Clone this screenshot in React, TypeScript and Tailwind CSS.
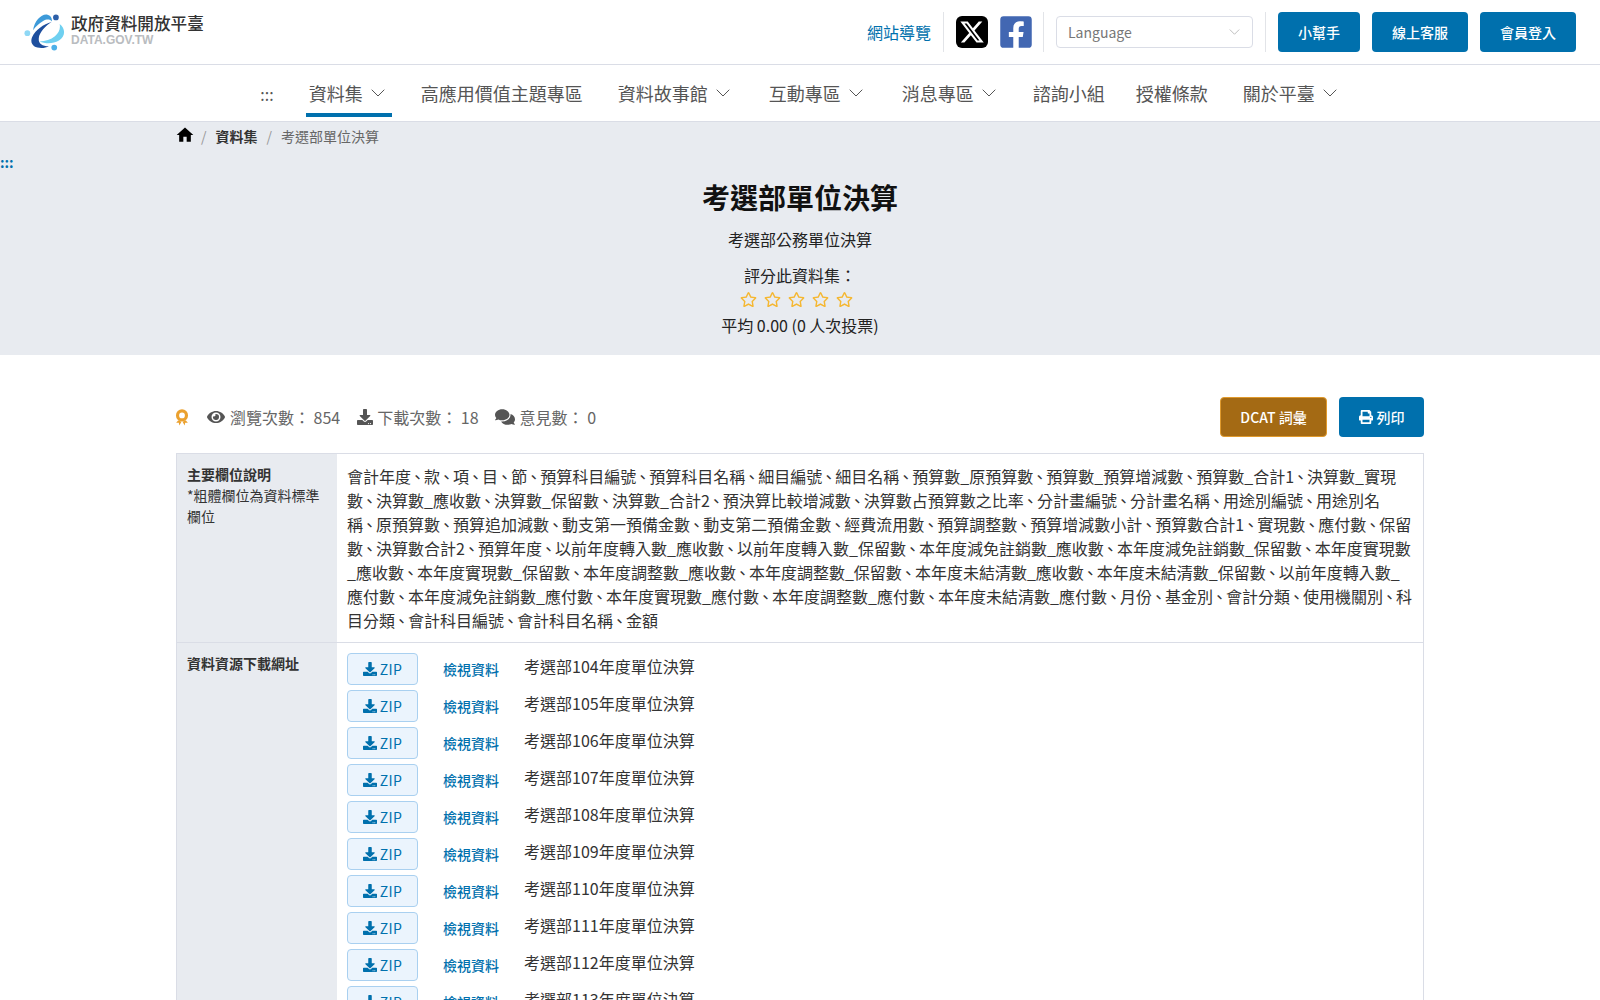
import { Fragment } from "react";
import { FaDownload, FaEye, FaComments, FaPrint, FaRegStar, FaFacebookSquare } from "react-icons/fa";
import { FaXTwitter } from "react-icons/fa6";
import { MdHome } from "react-icons/md";

const font = { fontFamily: '"Noto Sans CJK TC", "Noto Sans", sans-serif' };

function Logo() {
  return (
    <svg width="41" height="37" viewBox="70 40 122 110" className="shrink-0">
      <path d="M176 70C194 84 194 106 174 119C156 130 134 129 116 122C134 120 150 116 162 106C174 95 179 84 176 70Z" fill="#6fd0f0" />
      <path d="M97 88C101 60 123 38 140 42C149 44 154 52 153 62C147 55 137 55 127 61C114 68 105 78 97 88Z" fill="#3d9ad9" />
      <path d="M152 64C128 70 104 88 94 109C88 124 95 136 110 140C122 143 135 141 144 136C125 136 112 128 114 112C116 94 134 76 152 64Z" fill="#1e4f9e" />
      <circle cx="165" cy="50" r="8.5" fill="#2d5fa8" />
      <circle cx="80" cy="97" r="8.5" fill="#8fd8f5" />
      <circle cx="160" cy="140" r="8.5" fill="#4db0e8" />
    </svg>
  );
}

function Medal() {
  return (
    <svg width="14" height="17" viewBox="0 0 13 16" className="shrink-0 mr-[18px] -ml-px">
      <circle cx="6.5" cy="6" r="4.2" fill="none" stroke="#eba12f" strokeWidth="3" />
      <path d="M3 10.5L1 13H3.5L4 15.5L6 12ZM10 10.5L12 13H9.5L9 15.5L7 12Z" fill="#eba12f" />
    </svg>
  );
}

function Chevron({ w, h, color, className }: { w: number; h: number; color: string; className?: string }) {
  return (
    <svg width={w} height={h} viewBox="0 0 14 8" className={className}>
      <polyline points="0.7,0.7 7,7 13.3,0.7" fill="none" stroke={color} strokeWidth="1" />
    </svg>
  );
}

function Sep() {
  return <div className="w-px h-10 bg-[#e2e4e8]" />;
}

function NavItem({ label, chevron, active, className = "" }: { label: string; chevron?: boolean; active?: boolean; className?: string }) {
  return (
    <div className={`h-[52px] flex items-center px-[3px] border-b-4 pt-2 ${active ? "border-[#0070ad]" : "border-transparent"} ${className}`}>
      <span className="text-[18px] text-[#555555] leading-none whitespace-nowrap">{label}</span>
      {chevron && <Chevron w={14} h={8} color="#555555" className="ml-2 mr-1" />}
    </div>
  );
}

const descLines = [
  "會計年度、款、項、目、節、預算科目編號、預算科目名稱、細目編號、細目名稱、預算數_原預算數、預算數_預算增減數、預算數_合計1、決算數_實現",
  "數、決算數_應收數、決算數_保留數、決算數_合計2、預決算比較增減數、決算數占預算數之比率、分計畫編號、分計畫名稱、用途別編號、用途別名",
  "稱、原預算數、預算追加減數、動支第一預備金數、動支第二預備金數、經費流用數、預算調整數、預算增減數小計、預算數合計1、實現數、應付數、保留",
  "數、決算數合計2、預算年度、以前年度轉入數_應收數、以前年度轉入數_保留數、本年度減免註銷數_應收數、本年度減免註銷數_保留數、本年度實現數",
  "_應收數、本年度實現數_保留數、本年度調整數_應收數、本年度調整數_保留數、本年度未結清數_應收數、本年度未結清數_保留數、以前年度轉入數_",
  "應付數、本年度減免註銷數_應付數、本年度實現數_應付數、本年度調整數_應付數、本年度未結清數_應付數、月份、基金別、會計分類、使用機關別、科",
  "目分類、會計科目編號、會計科目名稱、金額",
];

const years = [104, 105, 106, 107, 108, 109, 110, 111, 112, 113, 114];

export default function App() {
  return (
    <div className="h-screen overflow-hidden bg-white text-[#333333]" style={font} lang="zh-Hant">
      <header className="h-[65px] border-b border-[#dadde6] flex items-center justify-between pl-6 pr-6">
        <div className="flex items-center gap-[6px]">
          <Logo />
          <div className="flex flex-col mb-[5px]">
            <span className="text-[16.6px] leading-[20px] text-[#333333] font-medium whitespace-nowrap">政府資料開放平臺</span>
            <span className="text-[12px] leading-[14px] font-bold text-[#b9bcc0]" style={{ fontFamily: '"Liberation Sans", sans-serif' }}>DATA.GOV.TW</span>
          </div>
        </div>
        <div className="flex items-center">
          <a className="text-[16px] text-[#0070ad] mr-3">網站導覽</a>
          <Sep />
          <div className="w-[32px] h-[32px] bg-black rounded-[6px] flex items-center justify-center ml-3">
            <FaXTwitter className="text-white w-[26px] h-[26px]" />
          </div>
          <FaFacebookSquare className="text-[#4267b2] w-[36px] h-[36px] ml-[10px]" />
          <div className="ml-[9px]"><Sep /></div>
          <div className="ml-[12px] w-[197px] h-8 border border-[#dadde6] rounded-[4px] flex items-center justify-between pl-[11px] pr-[12px]">
            <span className="text-[14px] text-[#777777]">Language</span>
            <Chevron w={11} h={6} color="#aaaaaa" />
          </div>
          <div className="ml-[12px]"><Sep /></div>
          <div className="flex gap-3 ml-3">
            <button className="w-[82px] h-10 bg-[#0070ad] rounded-[4px] text-white text-[14px] font-medium">小幫手</button>
            <button className="w-24 h-10 bg-[#0070ad] rounded-[4px] text-white text-[14px] font-medium">線上客服</button>
            <button className="w-24 h-10 bg-[#0070ad] rounded-[4px] text-white text-[14px] font-medium">會員登入</button>
          </div>
        </div>
      </header>

      <nav className="h-14 flex items-start justify-center pl-1">
        <div className="flex items-center gap-[29px]">
          <span className="text-[16px] text-[#555555] leading-none pr-[3px] mt-[6px]">:::</span>
          <NavItem label="資料集" chevron active className="-mr-[3px]" />
          <NavItem label="高應用價值主題專區" />
          <NavItem label="資料故事館" chevron />
          <NavItem label="互動專區" chevron />
          <NavItem label="消息專區" chevron className="-mr-[2px]" />
          <NavItem label="諮詢小組" className="-mr-1" />
          <NavItem label="授權條款" />
          <NavItem label="關於平臺" chevron />
        </div>
      </nav>

      <section className="h-[234px] bg-[#e8ebf0] border-t border-[#dadde6] flex flex-col">
        <div className="mx-auto w-[1248px] h-[28px] flex items-center text-[14px]">
          <MdHome className="w-[20px] h-[20px] text-black -ml-[1px] -mr-[2px] -mt-[2px]" />
          <span className="ml-[8px] mr-[9px] text-[#999999]">/</span>
          <span className="font-bold text-[#333333]">資料集</span>
          <span className="mx-[9px] text-[#999999]">/</span>
          <span className="text-[#666666]">考選部單位決算</span>
        </div>
        <span className="text-[#0070ad] text-[14px] font-bold leading-none h-[14px] mt-[5px]">:::</span>
        <h1 className="text-center text-[28px] leading-[40px] font-bold text-[#111111] mt-[8px]">考選部單位決算</h1>
        <p className="text-center text-[16px] leading-6 text-[#222222] mt-[10px]">考選部公務單位決算</p>
        <p className="text-center text-[16px] leading-6 text-[#222222] mt-[12px]">評分此資料集：</p>
        <div className="flex justify-center gap-[7px] mt-[4px] pr-[7px]">
          {[0, 1, 2, 3, 4].map((i) => (
            <FaRegStar key={i} className="w-[17px] h-[17px] text-[#f5b731]" />
          ))}
        </div>
        <p className="text-center text-[16px] leading-6 text-[#222222] mt-[5px]">平均 0.00 (0 人次投票)</p>
      </section>

      <main className="w-[1248px] mx-auto">
        <div className="flex items-center justify-between mt-[42px] h-10">
          <div className="flex items-center text-[16px] text-[#666666]">
            <Medal />
            <FaEye className="w-[18px] h-[18px] text-[#555555] mr-[5px]" />
            <span>瀏覽次數：&nbsp;854</span>
            <FaDownload className="w-4 h-4 text-[#555555] ml-[17px] mr-1" />
            <span>下載次數：&nbsp;18</span>
            <FaComments className="w-5 h-5 text-[#555555] ml-4 mr-[5px]" />
            <span>意見數：&nbsp;0</span>
          </div>
          <div className="flex gap-3">
            <button className="w-[107px] h-10 bg-[#a46a14] border border-[#e09a2d] rounded-[4px] text-white text-[14px] font-medium">DCAT 詞彙</button>
            <button className="w-[85px] h-10 bg-[#0070ad] rounded-[4px] text-white text-[14px] font-medium flex items-center justify-center gap-1">
              <FaPrint className="w-[14px] h-[14px]" />列印
            </button>
          </div>
        </div>

        <div className="mt-4 border border-[#dadde6]">
          <div className="flex border-b border-[#dadde6]">
            <div className="w-[160px] shrink-0 bg-[#e8ebf0] px-[10px] pt-[10px] text-[14px] leading-[21px] text-[#333333]">
              <b className="font-bold">主要欄位說明</b>
              <br />*粗體欄位為資料標準欄位
            </div>
            <div className="flex-1 p-[10px] text-[16px] leading-6 text-[#333333]">
              {descLines.map((line, l) => (
                <div key={l} className="whitespace-nowrap">
                  {line.split("、").map((part, i) => (
                    <Fragment key={i}>
                      {i > 0 && <span className="px-[2.5px] [font-feature-settings:'palt']">、</span>}
                      {part}
                    </Fragment>
                  ))}
                </div>
              ))}
            </div>
          </div>
          <div className="flex">
            <div className="w-[160px] shrink-0 bg-[#e8ebf0] px-[10px] pt-[10px] text-[14px] leading-[21px] font-bold text-[#333333]">資料資源下載網址</div>
            <div className="flex-1 pl-[10px] pt-[10px] flex flex-col gap-[5px]">
              {years.map((y) => (
                <div key={y} className="flex items-start h-8">
                  <button className="w-[71px] h-8 bg-[#ebf4fd] border border-[#a9d0f0] rounded-[4px] text-[#0070ad] text-[14px] tracking-[0.3px] flex items-center justify-center gap-[3px]">
                    <FaDownload className="w-[14px] h-[14px]" />ZIP
                  </button>
                  <a className="ml-[25px] mt-[6px] text-[14px] leading-[21px] font-medium text-[#0070ad]">檢視資料</a>
                  <span className="ml-[25px] mt-px text-[16px] leading-6 text-[#333333]">考選部{y}年度單位決算</span>
                </div>
              ))}
            </div>
          </div>
        </div>
      </main>
    </div>
  );
}
